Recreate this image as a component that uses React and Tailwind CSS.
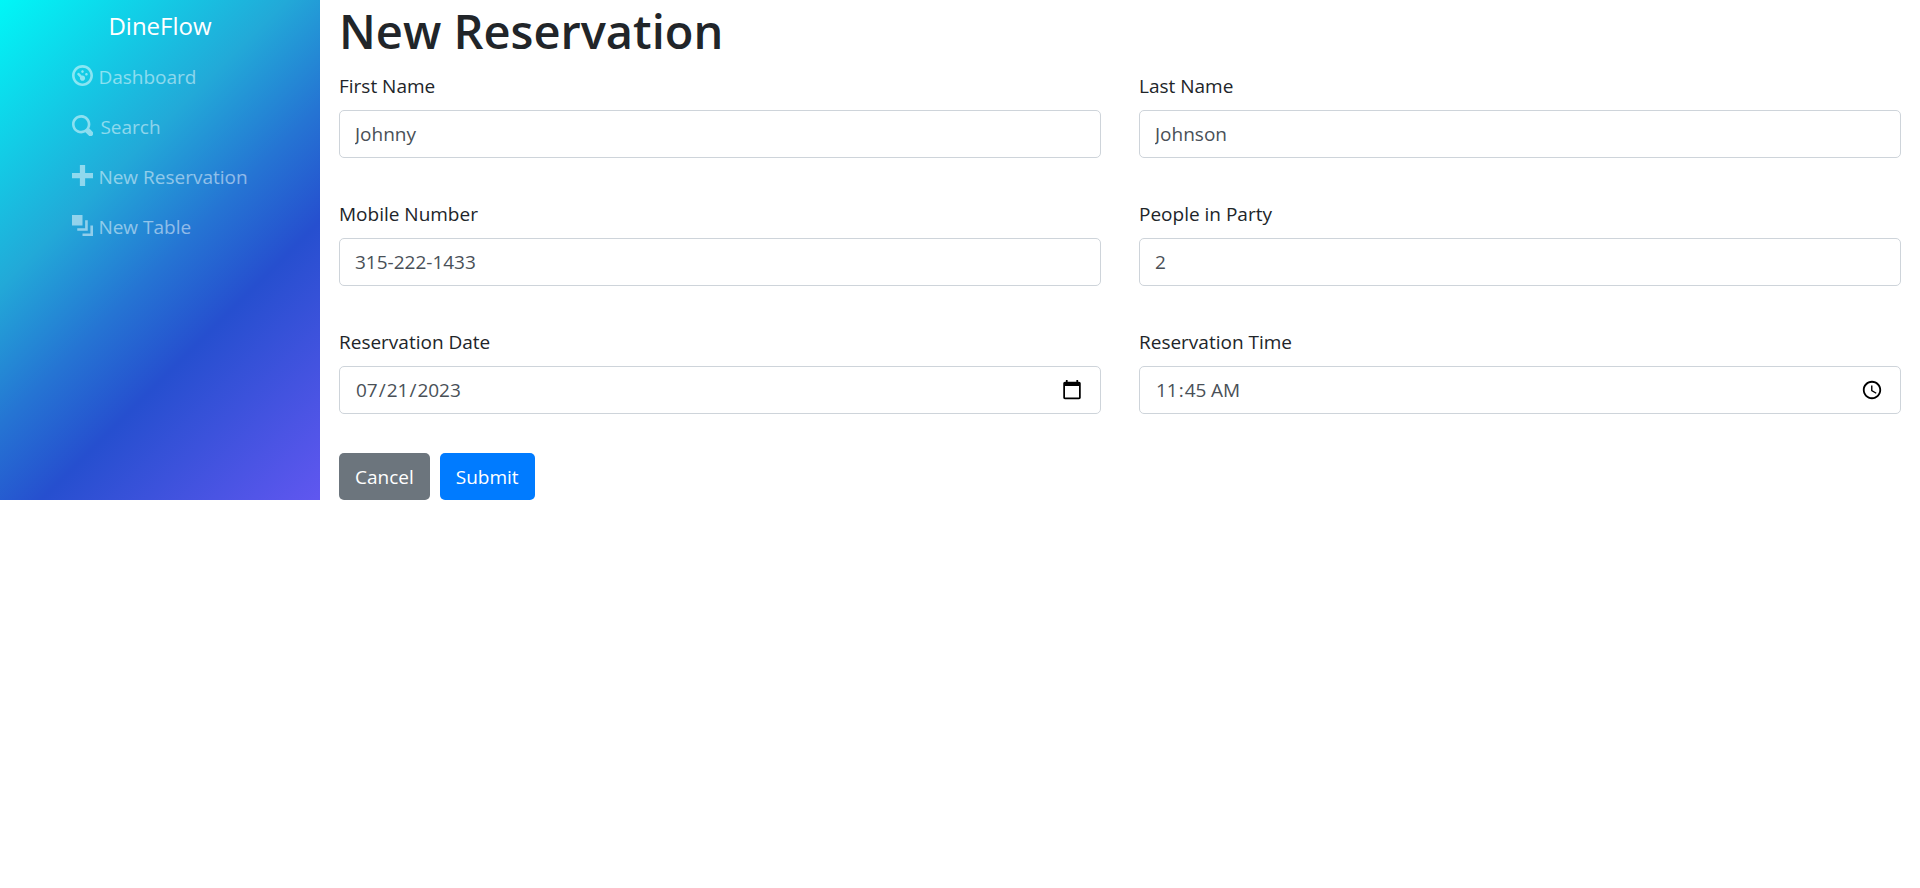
const navItems = [
  {
    label: "Dashboard",
    icon: "M4 0c-2.2 0-4 1.8-4 4s1.8 4 4 4 4-1.8 4-4-1.8-4-4-4zm0 1c1.66 0 3 1.34 3 3s-1.34 3-3 3-3-1.34-3-3 1.34-3 3-3zm0 1c-.28 0-.5.22-.5.5s.22.5.5.5.5-.22.5-.5-.22-.5-.5-.5zm-1.66 1a.5.5 0 0 0-.19.84l.91.91c-.02.08-.06.16-.06.25 0 .55.45 1 1 1s1-.45 1-1-.45-1-1-1c-.09 0-.17.04-.25.06l-.91-.91a.5.5 0 0 0-.44-.16.5.5 0 0 0-.06 0zm3.16 0c-.28 0-.5.22-.5.5s.22.5.5.5.5-.22.5-.5-.22-.5-.5-.5z",
    gap: "gap-[5px]",
  },
  {
    label: "Search",
    icon: "M3.5 0c-1.93 0-3.5 1.57-3.5 3.5s1.57 3.5 3.5 3.5c.59 0 1.17-.14 1.66-.41a1 1 0 0 0 .13.13l1 1a1.02 1.02 0 1 0 1.44-1.44l-1-1a1 1 0 0 0-.16-.13c.27-.49.44-1.06.44-1.66 0-1.93-1.55-3.5-3.5-3.5zm0 1c1.39 0 2.5 1.11 2.5 2.5 0 .66-.24 1.27-.66 1.72-.01.01-.02.02-.03.03a1 1 0 0 0-.13.13c-.44.4-1.04.63-1.69.63-1.39 0-2.5-1.11-2.5-2.5s1.11-2.5 2.5-2.5z",
    gap: "gap-[7px]",
  },
  {
    label: "New Reservation",
    icon: "M3 0v3h-3v2h3v3h2v-3h3v-2h-3v-3h-2z",
    gap: "gap-[5px]",
  },
  {
    label: "New Table",
    icon: "M0 0v4h4v-4h-4zm5 2v3h-3v1h4v-4h-1zm2 2v3h-3v1h4v-4h-1z",
    gap: "gap-[5px]",
  },
];

const fields = [
  { id: "first_name", label: "First Name", type: "text", value: "Johnny" },
  { id: "last_name", label: "Last Name", type: "text", value: "Johnson" },
  { id: "mobile_number", label: "Mobile Number", type: "tel", value: "315-222-1433" },
  { id: "people", label: "People in Party", type: "text", value: "2" },
  { id: "reservation_date", label: "Reservation Date", type: "date", value: "2023-07-21" },
  { id: "reservation_time", label: "Reservation Time", type: "time", value: "11:45" },
];

function Sidebar() {
  return (
    <nav className="flex w-1/6 shrink-0 flex-col items-center bg-[linear-gradient(135deg,#00f7f7_0%,#22a9d8_35%,#2574d3_52%,#264fcf_66%,#6057f0_100%)]">
      <a href="#home" className="py-2 text-2xl leading-9 text-white">
        DineFlow
      </a>
      <ul>
        {navItems.map((item) => (
          <li key={item.label}>
            <a href="#nav" className={`flex h-[50px] items-center text-white/50 ${item.gap}`}>
              <svg viewBox="0 0 8 8" className="mb-1 size-[21px] fill-current" aria-hidden="true">
                <path d={item.icon} />
              </svg>
              {item.label}
            </a>
          </li>
        ))}
      </ul>
    </nav>
  );
}

function Field({ id, label, type, value }) {
  return (
    <div className="flex flex-col gap-2">
      <label htmlFor={id} className="leading-[32px]">
        {label}
      </label>
      <input
        id={id}
        name={id}
        type={type}
        defaultValue={value}
        className="h-12 w-full rounded-[5px] border border-[#ced4da] bg-white px-[15px] text-[#495057] [&::-webkit-calendar-picker-indicator]:size-[22px] [&::-webkit-calendar-picker-indicator]:p-0.5"
      />
    </div>
  );
}

export default function App() {
  return (
    <div className="flex font-['Open_Sans','Noto_Sans',sans-serif] text-[19px] leading-[30px] text-[#212529]">
      <Sidebar />
      <main className="min-w-0 flex-1 px-[19px]">
        <h1 className="mb-2 text-[47px] leading-[62px] font-semibold">New Reservation</h1>
        <form>
          <div className="grid grid-cols-2 gap-x-[38px] gap-y-10">
            {fields.map((field) => (
              <Field key={field.id} {...field} />
            ))}
          </div>
          <div className="mt-[39px] flex gap-2.5">
            <button type="button" className="h-[47px] rounded-[5px] bg-[#6c757d] px-4 text-white">
              Cancel
            </button>
            <button type="submit" className="h-[47px] rounded-[5px] bg-[#007bff] px-4 text-white">
              Submit
            </button>
          </div>
        </form>
      </main>
    </div>
  );
}
